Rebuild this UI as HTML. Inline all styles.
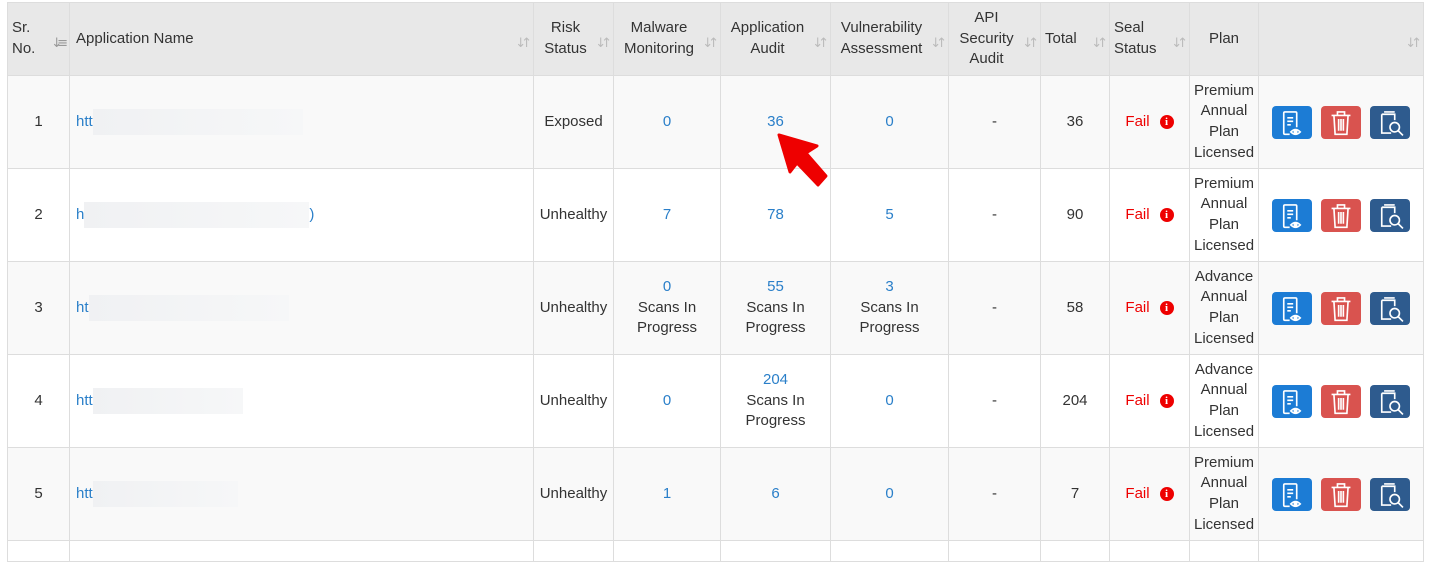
<!DOCTYPE html><html><head><style>
body{margin:0;background:#fff;font-family:"Liberation Sans",sans-serif;font-size:15px;color:#333;width:1431px;height:548px;overflow:hidden;position:relative}
table{position:absolute;left:7px;top:2px;border-collapse:collapse;table-layout:fixed;width:1416px}
td,th{border:1px solid #ddd;text-align:center;vertical-align:middle;line-height:20.6px;padding:0 4px;position:relative}
th{background:#e8e8e8;font-weight:normal;padding:0 20px 0 4px}
tr.h{height:73px}
tr.r td{height:92px}
tr.o td{background:#f9f9f9}
a{color:#2a7fc9;text-decoration:none}
.s{position:absolute;right:6px;top:31px;color:#bbb;font-size:13px;letter-spacing:-5px;font-family:"DejaVu Sans",sans-serif}
.l{text-align:left;padding-left:6px}
.f{color:#e00}
.i{display:inline-block;width:14px;height:14px;border-radius:50%;background:#e00;color:#fff;font-size:11px;font-weight:bold;line-height:14px;text-align:center;margin-left:10px;vertical-align:1px;font-family:"Liberation Serif",serif}
.b{display:inline-block;width:40px;height:33px;border-radius:4px;vertical-align:middle;margin:0 4.5px;position:relative}
.b svg{position:absolute;left:0;top:0}
.bl{background:#1c7cd5}.rd{background:#d9534f}.dk{background:#2e5b8e}
.blur{display:inline-block;height:26px;vertical-align:middle;background:linear-gradient(90deg,#f0f1f3,#f6f7f8)}
</style></head><body>
<table>
<colgroup><col style="width:62px"><col style="width:464px"><col style="width:80px"><col style="width:107px"><col style="width:110px"><col style="width:118px"><col style="width:92px"><col style="width:69px"><col style="width:80px"><col style="width:69px"><col style="width:165px"></colgroup>
<tr class="h"><th style="text-align:left">Sr.<br>No.<span class="s" style="color:#999">↓≡</span></th><th class="l">Application Name<span class="s">↓↑</span></th><th>Risk<br>Status<span class="s">↓↑</span></th><th>Malware<br>Monitoring<span class="s">↓↑</span></th><th>Application<br>Audit<span class="s">↓↑</span></th><th>Vulnerability<br>Assessment<span class="s">↓↑</span></th><th>API<br>Security<br>Audit<span class="s">↓↑</span></th><th style="text-align:left">Total<span class="s">↓↑</span></th><th style="text-align:left">Seal<br>Status<span class="s">↓↑</span></th><th style="padding-right:4px">Plan</th><th><span class="s">↓↑</span></th></tr>
<tr class="r o"><td>1</td><td class="l"><a>htt</a><span class="blur" style="width:210px"></span></td><td>Exposed</td><td><a>0</a></td><td><a>36</a></td><td><a>0</a></td><td>-</td><td>36</td><td><span class="f">Fail</span><span class="i">i</span></td><td>Premium<br>Annual<br>Plan<br>Licensed</td><td class="btns"></td></tr>
<tr class="r"><td>2</td><td class="l"><a>h</a><span class="blur" style="width:225px"></span><a>)</a></td><td>Unhealthy</td><td><a>7</a></td><td><a>78</a></td><td><a>5</a></td><td>-</td><td>90</td><td><span class="f">Fail</span><span class="i">i</span></td><td>Premium<br>Annual<br>Plan<br>Licensed</td><td class="btns"></td></tr>
<tr class="r o"><td>3</td><td class="l"><a>ht</a><span class="blur" style="width:200px"></span></td><td>Unhealthy</td><td><a>0</a><br>Scans In<br>Progress</td><td><a>55</a><br>Scans In<br>Progress</td><td><a>3</a><br>Scans In<br>Progress</td><td>-</td><td>58</td><td><span class="f">Fail</span><span class="i">i</span></td><td>Advance<br>Annual<br>Plan<br>Licensed</td><td class="btns"></td></tr>
<tr class="r"><td>4</td><td class="l"><a>htt</a><span class="blur" style="width:150px"></span></td><td>Unhealthy</td><td><a>0</a></td><td><a>204</a><br>Scans In<br>Progress</td><td><a>0</a></td><td>-</td><td>204</td><td><span class="f">Fail</span><span class="i">i</span></td><td>Advance<br>Annual<br>Plan<br>Licensed</td><td class="btns"></td></tr>
<tr class="r o"><td>5</td><td class="l"><a>htt</a><span class="blur" style="width:145px"></span></td><td>Unhealthy</td><td><a>1</a></td><td><a>6</a></td><td><a>0</a></td><td>-</td><td>7</td><td><span class="f">Fail</span><span class="i">i</span></td><td>Premium<br>Annual<br>Plan<br>Licensed</td><td class="btns"></td></tr>
<tr><td style="height:20px"></td><td></td><td></td><td></td><td></td><td></td><td></td><td></td><td></td><td></td><td></td></tr>
</table>
<svg style="position:absolute;left:0;top:0" width="1431" height="548"><path d="M779 135 L817 146 L806 153 L826 176 L818 185 L797 163 L790 172 Z" fill="#e00" stroke="#e00" stroke-width="3" stroke-linejoin="round"/></svg>
<script>
var v='width="40" height="33" viewBox="4 2 32 28" fill="none" stroke="#fff" stroke-width="1.4"';
var h='<span class="b bl"><svg '+v+'><path d="M24 20V8a1 1 0 0 0-1-1H14a1 1 0 0 0-1 1v17a1 1 0 0 0 1 1h4"/><path d="M16 12h5M16 15h5M16 18h3"/><path d="M19 24q4-4 8 0q-4 4-8 0z"/><circle cx="23" cy="24" r="1" fill="#fff"/></svg></span><span class="b rd"><svg '+v+'><path d="M12 10h16M17 10V7h6v3M14 10l1 16h10l1-16M18 13v10M20 13v10M22 13v10"/></svg></span><span class="b dk"><svg '+v+'><path d="M13 9h11v5M13 9v16h8M15 7h9"/><circle cx="24" cy="20" r="4"/><path d="M27 23l4 4"/></svg></span>';
document.querySelectorAll('.btns').forEach(function(e){e.innerHTML=h});
</script>
</body></html>
